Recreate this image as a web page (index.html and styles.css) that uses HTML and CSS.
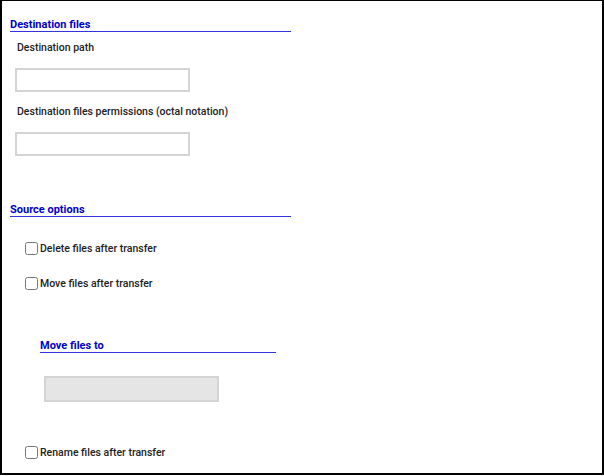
FILE: index.html
```html
<!DOCTYPE html>
<html>
<head>
<meta charset="utf-8">
<link rel="stylesheet" href="styles.css">
</head>
<body>
<div class="frame">
  <section class="group">
    <h2 class="heading">Destination files</h2>
    <div class="field">
      <label class="label">Destination path</label>
      <input class="text" type="text">
    </div>
    <div class="field second">
      <label class="label">Destination files permissions (octal notation)</label>
      <input class="text" type="text">
    </div>
  </section>
  <section class="group source">
    <h2 class="heading">Source options</h2>
    <label class="check first"><input type="checkbox"><span>Delete files after transfer</span></label>
    <label class="check"><input type="checkbox"><span>Move files after transfer</span></label>
    <div class="sub">
      <h2 class="heading sub-heading">Move files to</h2>
      <input class="text disabled" type="text" disabled>
    </div>
    <label class="check last"><input type="checkbox"><span>Rename files after transfer</span></label>
  </section>
</div>
</body>
</html>
```
FILE: styles.css
```css
html, body { margin: 0; padding: 0; background: #fff; }
body { font-family: Roboto, "Liberation Sans", Arial, sans-serif; color: #222; }
.frame {
  width: 600px; height: 472px;
  border-top: 1px solid #000; border-left: 2px solid #000;
  border-right: 2px solid #000; border-bottom: 2px solid #000;
  box-sizing: content-box;
}
.group { padding-left: 8px; }
.heading {
  margin: 0; width: 281px;
  font-size: 11px; font-weight: bold; color: #0000cc;
  border-bottom: 1px solid #3333dd;
  line-height: 13px; padding-top: 17px;
}
.field { padding-left: 5px; }
.label { display: block; font-size: 10.5px; font-weight: 500; margin-top: 9px; line-height: 13px; padding-left: 2px; }
.field.second .label { margin-top: 13px; }
.text {
  display: block; box-sizing: border-box; width: 175px; height: 24px;
  border: 2px solid #d4d4d4; margin: 14px 0 0 0; background: #fff;
}
.source { padding-top: 47px; }
.source .heading { padding-top: 0; }
.check { display: flex; align-items: center; font-size: 10.5px; font-weight: 500; margin: 0 0 0 15px; height: 14px; }
.check input { width: 13px; height: 13px; margin: 0 2px 0 0; }
.check.first { margin-top: 24px; }
.check + .check { margin-top: 21px; }
.sub { padding-left: 30px; padding-top: 49px; }
.sub .heading.sub-heading { width: 236px; }
.disabled { background: #e5e5e5; margin-top: 23px; width: 175px; height: 26px; margin-left: 4px; }
.check.last { margin-top: 43px; }
```
